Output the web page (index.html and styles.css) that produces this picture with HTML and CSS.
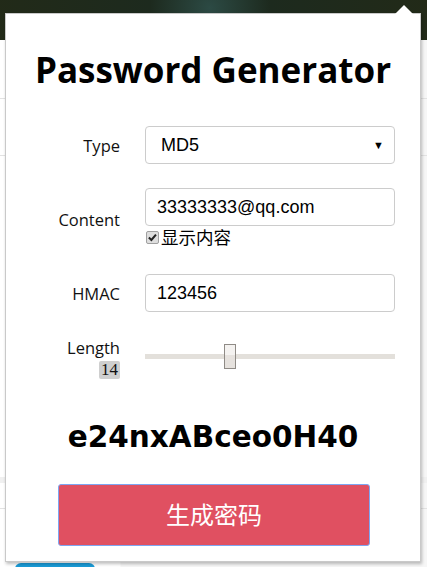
FILE: index.html
```html
<!DOCTYPE html>
<html>
<head>
<meta charset="utf-8">
<link rel="stylesheet" href="styles.css">
</head>
<body>
<div class="page">
  <div class="page-top"></div>
  <div class="page-body">
    <div class="page-line l1"></div>
    <div class="page-line l2"></div>
    <div class="page-line l3"></div>
    <div class="page-line l4"></div>
  </div>
  <div class="page-tab"></div>
</div>

<div class="arrow"></div>
<div class="popup">
  <h1 class="title">Password Generator</h1>
  <div class="form">
    <label class="label">Type</label>
    <div class="control">
      <div class="select"><span>MD5</span><span class="caret">▼</span></div>
    </div>

    <label class="label">Content</label>
    <div class="control">
      <div class="input">33333333@qq.com</div>
      <div class="check-row"><span class="checkbox"><svg viewBox="0 0 13 13" width="11" height="11"><path d="M2.2 6.6 L5.2 9.4 L10.6 3.2" fill="none" stroke="#222" stroke-width="2.4"/></svg></span><span class="check-text">显示内容</span></div>
    </div>

    <label class="label">HMAC</label>
    <div class="control">
      <div class="input">123456</div>
    </div>

    <div class="label label-stack">
      <span>Length</span>
      <span class="badge">14</span>
    </div>
    <div class="control">
      <div class="slider"><div class="track"></div><div class="thumb" style="left:79px"></div></div>
    </div>
  </div>
  <div class="result">e24nxABceo0H40</div>
  <div class="btn">生成密码</div>
</div>
</body>
</html>
```

FILE: styles.css
```css
html, body {
  margin: 0;
  padding: 0;
}
body {
  width: 427px;
  height: 567px;
  overflow: hidden;
  position: relative;
  font-family: "Open Sans", "Noto Sans CJK SC", sans-serif;
  background: #fff;
}
.page {
  width: 427px;
  height: 567px;
  display: flex;
  flex-direction: column;
}
.page-top {
  height: 40px;
  background: radial-gradient(circle at 210px 8px, #2c4a44 0, #1d2a1e 60px, #222a18 100%);
}
.page-body {
  flex: 1;
  position: relative;
  background: linear-gradient(to right, #fff 0, #fff 120px, #f6f6f6 121px);
}
.page-line {
  position: absolute;
  left: 0;
  width: 100%;
  height: 1px;
  background: #e2e2e2;
}
.l1 { top: 58px; }
.l2 { top: 115px; }
.l3 { top: 437px; height: 6px; background: #f0f0f0; }
.l4 { top: 468px; }
.page-tab {
  position: absolute;
  left: 15px;
  top: 563px;
  width: 80px;
  height: 10px;
  border-radius: 6px 6px 0 0;
  background: #1a9ad6;
}
.arrow {
  position: absolute;
  left: 395px;
  top: 5px;
  width: 0;
  height: 0;
  border-left: 9px solid transparent;
  border-right: 9px solid transparent;
  border-bottom: 9px solid #fff;
  z-index: 3;
}
.popup {
  position: absolute;
  left: 5px;
  top: 13px;
  width: 414px;
  height: 547px;
  background: #fff;
  border: 1px solid #c9c9c9;
  box-shadow: 1px 2px 3px rgba(0,0,0,0.25);
  z-index: 2;
  display: flex;
  flex-direction: column;
}
.title {
  margin: 33px 0 0;
  text-align: center;
  font-size: 35px;
  font-weight: 700;
  line-height: 45px;
  color: #000;
}
.form {
  margin: 34px 0 0 20px;
  display: grid;
  grid-template-columns: 94px 250px;
  column-gap: 25px;
  row-gap: 24px;
  align-items: center;
}
.label {
  text-align: right;
  font-size: 16.5px;
  color: #111;
}
.label-stack {
  display: flex;
  flex-direction: column;
  align-items: flex-end;
  line-height: 20px;
  padding-top: 2px;
}
.badge {
  margin-top: 3px;
  font-family: "Liberation Serif", serif;
  font-size: 17px;
  line-height: 18px;
  padding: 0 2px;
  background: #cfcfcf;
  border-radius: 2px;
  color: #111;
}
.control {
  display: flex;
  flex-direction: column;
}
.select, .input {
  box-sizing: border-box;
  height: 38px;
  border: 1px solid #cccccc;
  border-radius: 4px;
  font-family: "Liberation Sans", Arial, sans-serif;
  font-size: 18px;
  color: #000;
  display: flex;
  align-items: center;
  background: #fff;
}
.select {
  padding: 0 10px 0 15px;
  justify-content: space-between;
}
.caret {
  font-size: 11px;
}
.input {
  padding: 0 11px;
}
.check-row {
  display: flex;
  align-items: center;
  margin: 1px 0 3px;
  height: 20px;
}
.checkbox {
  width: 13px;
  height: 13px;
  box-sizing: border-box;
  margin-left: 1px;
  border: 1px solid #a0a0a0;
  border-radius: 2px;
  background: #dedede;
  display: flex;
  align-items: center;
  justify-content: center;
}
.checkbox svg { display: block; }
.check-text {
  margin-left: 2px;
  font-family: "Noto Sans CJK SC", sans-serif;
  font-size: 17.5px;
  color: #000;
  line-height: 20px;
}
.slider {
  position: relative;
  height: 26px;
  margin-top: -1px;
}
.track {
  position: absolute;
  left: 0;
  right: 0;
  top: 10px;
  height: 5px;
  background: #e3e0db;
}
.thumb {
  position: absolute;
  top: 0;
  width: 12px;
  height: 25px;
  box-sizing: border-box;
  border: 1px solid #8f8b86;
  background: linear-gradient(#f4f2f0 0, #f4f2f0 45%, #e6e2de 45%);
}
.result {
  margin-top: 38px;
  text-align: center;
  font-family: "DejaVu Sans", sans-serif;
  font-weight: 700;
  font-size: 29.5px;
  line-height: 40px;
  color: #000;
}
.btn {
  margin: 27px 0 0 52px;
  width: 312px;
  height: 62px;
  box-sizing: border-box;
  border: 1px solid #7ea6f2;
  border-radius: 3px;
  background: #e05061;
  color: #fff;
  font-family: "Noto Sans CJK SC", sans-serif;
  font-size: 24px;
  display: flex;
  align-items: center;
  justify-content: center;
  padding-bottom: 3px;
}
```
